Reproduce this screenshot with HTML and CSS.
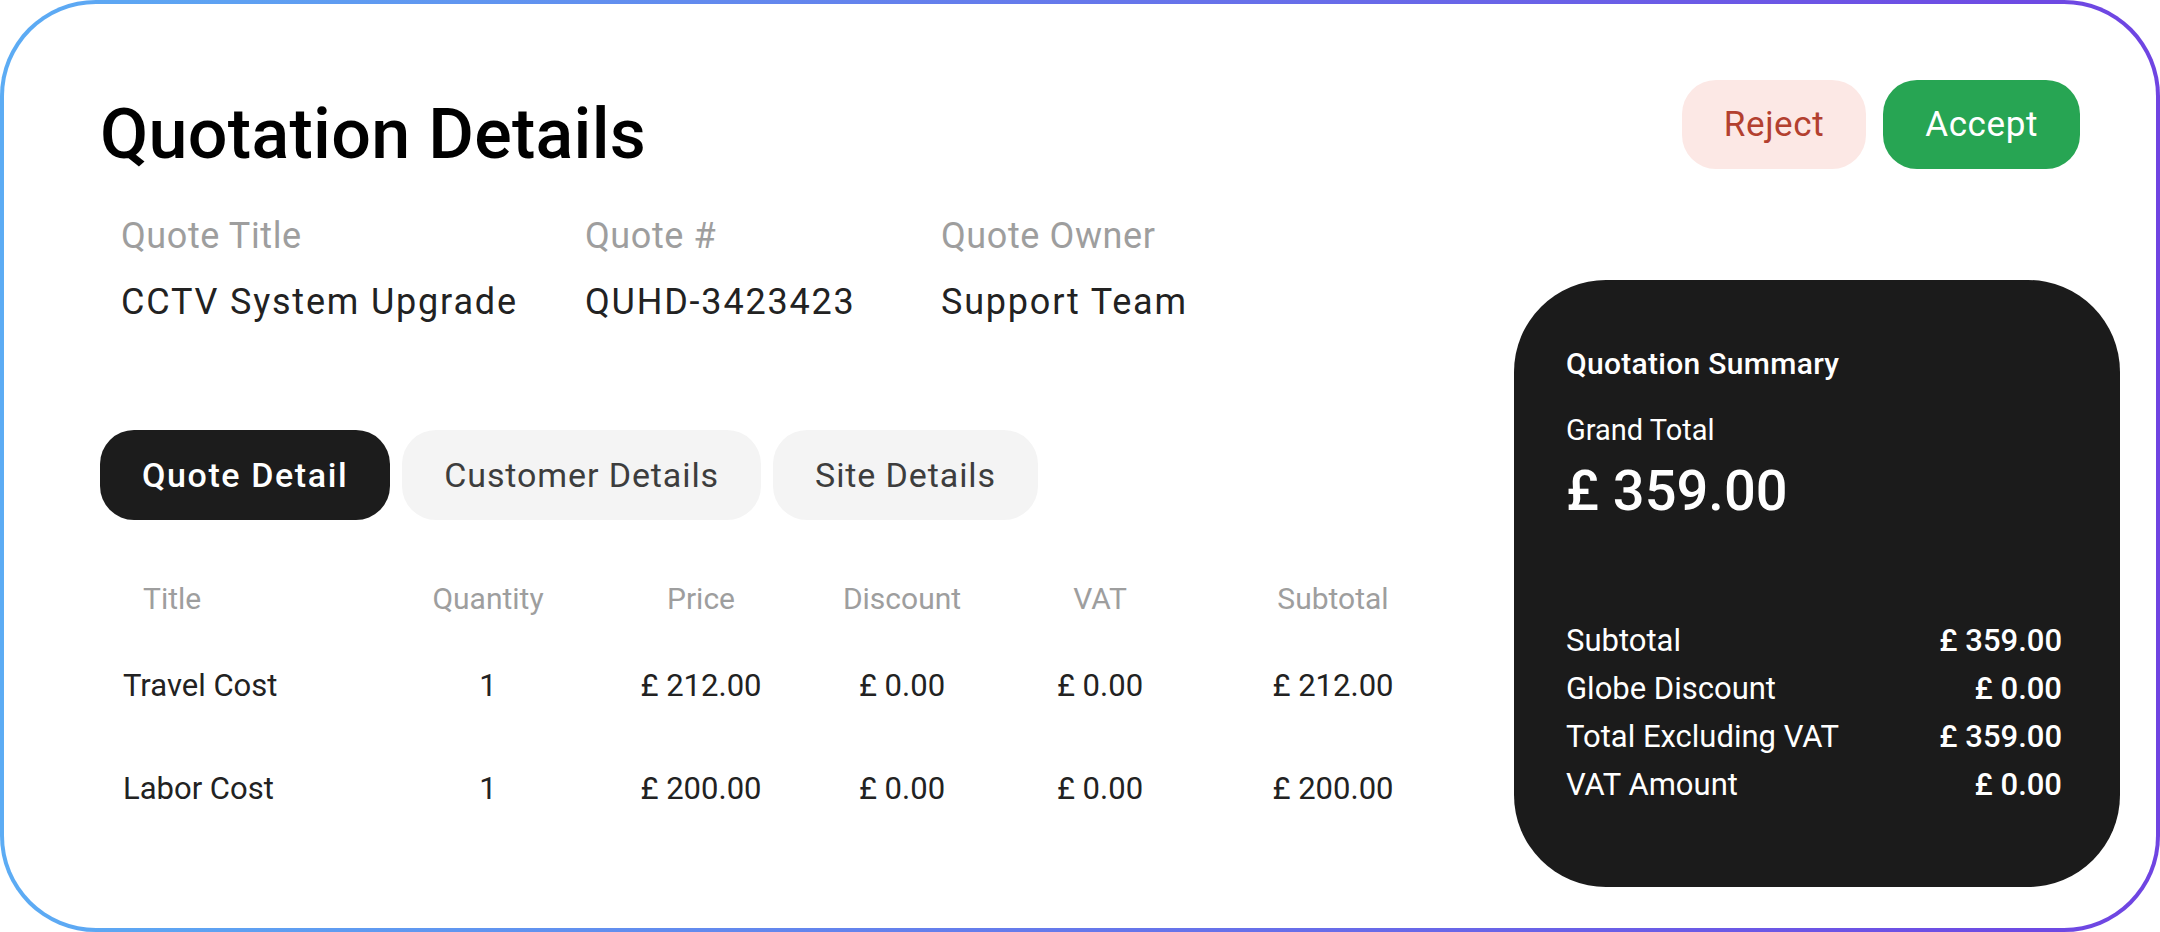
FILE: index.html
```html
<!DOCTYPE html>
<html lang="en">
<head>
    <meta charset="UTF-8">
    <meta name="viewport" content="width=device-width, initial-scale=1.0">
    <title>Quotation Details</title>
<link rel="stylesheet" href="styles.css">
</head>
<body>
<div class="wrap">
    <div class="top-cont">
        <h1>Quotation Details</h1>
        <div class="actions">
            <button class="btn-reject">Reject</button>
            <button class="btn-accept">Accept</button>
        </div>
    </div>
    <div class="content">
        <div class="main">
            <div class="meta">
                <div class="meta-item">
                    <span class="label">Quote Title</span>
                    <span class="value">CCTV System Upgrade</span>
                </div>
                <div class="meta-item">
                    <span class="label">Quote #</span>
                    <span class="value">QUHD-3423423</span>
                </div>
                <div class="meta-item">
                    <span class="label">Quote Owner</span>
                    <span class="value">Support Team</span>
                </div>
            </div>
            <div class="tabs">
                <button class="active">Quote Detail</button>
                <button>Customer Details</button>
                <button>Site Details</button>
            </div>
            <table class="items">
                <colgroup>
                    <col style="width:281px">
                    <col style="width:214px">
                    <col style="width:212px">
                    <col style="width:190px">
                    <col style="width:206px">
                    <col style="width:260px">
                </colgroup>
                <thead>
                    <tr>
                        <th>Title</th>
                        <th>Quantity</th>
                        <th>Price</th>
                        <th>Discount</th>
                        <th>VAT</th>
                        <th>Subtotal</th>
                    </tr>
                </thead>
                <tbody>
                    <tr>
                        <td>Travel Cost</td>
                        <td>1</td>
                        <td>£ 212.00</td>
                        <td>£ 0.00</td>
                        <td>£ 0.00</td>
                        <td>£ 212.00</td>
                    </tr>
                    <tr>
                        <td>Labor Cost</td>
                        <td>1</td>
                        <td>£ 200.00</td>
                        <td>£ 0.00</td>
                        <td>£ 0.00</td>
                        <td>£ 200.00</td>
                    </tr>
                </tbody>
            </table>
        </div>
        <div class="summary">
            <h2>Quotation Summary</h2>
            <p class="grand-label">Grand Total</p>
            <p class="grand-total">£ 359.00</p>
            <div class="rows">
                <div class="row"><span>Subtotal</span><span>£ 359.00</span></div>
                <div class="row"><span>Globe Discount</span><span>£ 0.00</span></div>
                <div class="row"><span>Total Excluding VAT</span><span>£ 359.00</span></div>
                <div class="row"><span>VAT Amount</span><span>£ 0.00</span></div>
            </div>
        </div>
    </div>
</div>
</body>
</html>
```

FILE: styles.css
```css
* {box-sizing: border-box;}
body {margin: 0; background: #fff; font-family: Roboto, 'Noto Sans', sans-serif; color: #222;}
button {font-family: inherit; border: 0; cursor: pointer;}

/* outer card with the blue-to-violet outline */
.wrap {width: 2160px; height: 932px; padding: 76px 36px 0 96px; border: 4px solid transparent; border-radius: 96px; background: linear-gradient(#fff, #fff) padding-box, linear-gradient(90deg, #5cacf4, #6f44e2) border-box;}

.top-cont {display: flex; justify-content: space-between; align-items: flex-start; padding-right: 40px;}
.top-cont h1 {margin: 19px 0 0; font-size: 70px; line-height: 70px; font-weight: 500; letter-spacing: 0.3px; color: #000;}
.actions {display: flex; gap: 17px;}
.actions button {height: 89px; padding: 0 42px; border-radius: 34px; font-size: 35px; letter-spacing: 0.6px;}
.btn-reject {background: #fce8e5; color: #b3402f;}
.btn-accept {background: #27a553; color: #fff;}

.content {display: flex; justify-content: space-between; align-items: flex-start;}
.main {width: 1363px;}

.meta {display: grid; grid-template-columns: 464px 356px auto; margin-top: 45px; padding-left: 21px;}
.meta-item {display: flex; flex-direction: column; gap: 20px;}
.meta .label {font-size: 36px; line-height: 44px; letter-spacing: 0.6px; color: #9e9e9e;}
.meta .value {margin-top: 2px; font-size: 36px; line-height: 44px; letter-spacing: 1.8px; color: #222;}

.tabs {display: flex; gap: 12px; margin-top: 106px;}
.tabs button {height: 90px; padding: 0 42px; border-radius: 34px; background: #f4f4f4; color: #3d3d3d; font-size: 34px; letter-spacing: 0.9px;}
.tabs .active {background: #1c1c1c; color: #fff; font-weight: 500; letter-spacing: 1.6px;}

.items {margin-top: 43px; width: 1363px; border-collapse: collapse; table-layout: fixed;}
.items th {height: 71px; padding: 0; font-size: 30px; font-weight: 400; color: #9e9e9e; text-align: center;}
.items td {height: 103px; padding: 0; font-size: 31px; color: #222; text-align: center;}
.items th:first-child {padding-left: 43px; text-align: left;}
.items td:first-child {padding-left: 23px; text-align: left;}

/* dark totals panel */
.summary {width: 606px; height: 607px; margin-top: 111px; padding: 66px 58px 0 52px; border-radius: 92px; background: #1b1b1b; color: #fff;}
.summary h2 {margin: 0; font-size: 30px; line-height: 36px; font-weight: 500; letter-spacing: 0.3px;}
.summary p {margin: 0;}
.summary .grand-label {margin-top: 30px; font-size: 29px; line-height: 36px;}
.summary .grand-total {margin-top: 10px; font-size: 56px; line-height: 67px; font-weight: 500;}
.summary .rows {margin-top: 92px;}
.summary .row {display: flex; justify-content: space-between; font-size: 31px; line-height: 48px;}
.summary .row span:last-child {font-weight: 500;}
```
